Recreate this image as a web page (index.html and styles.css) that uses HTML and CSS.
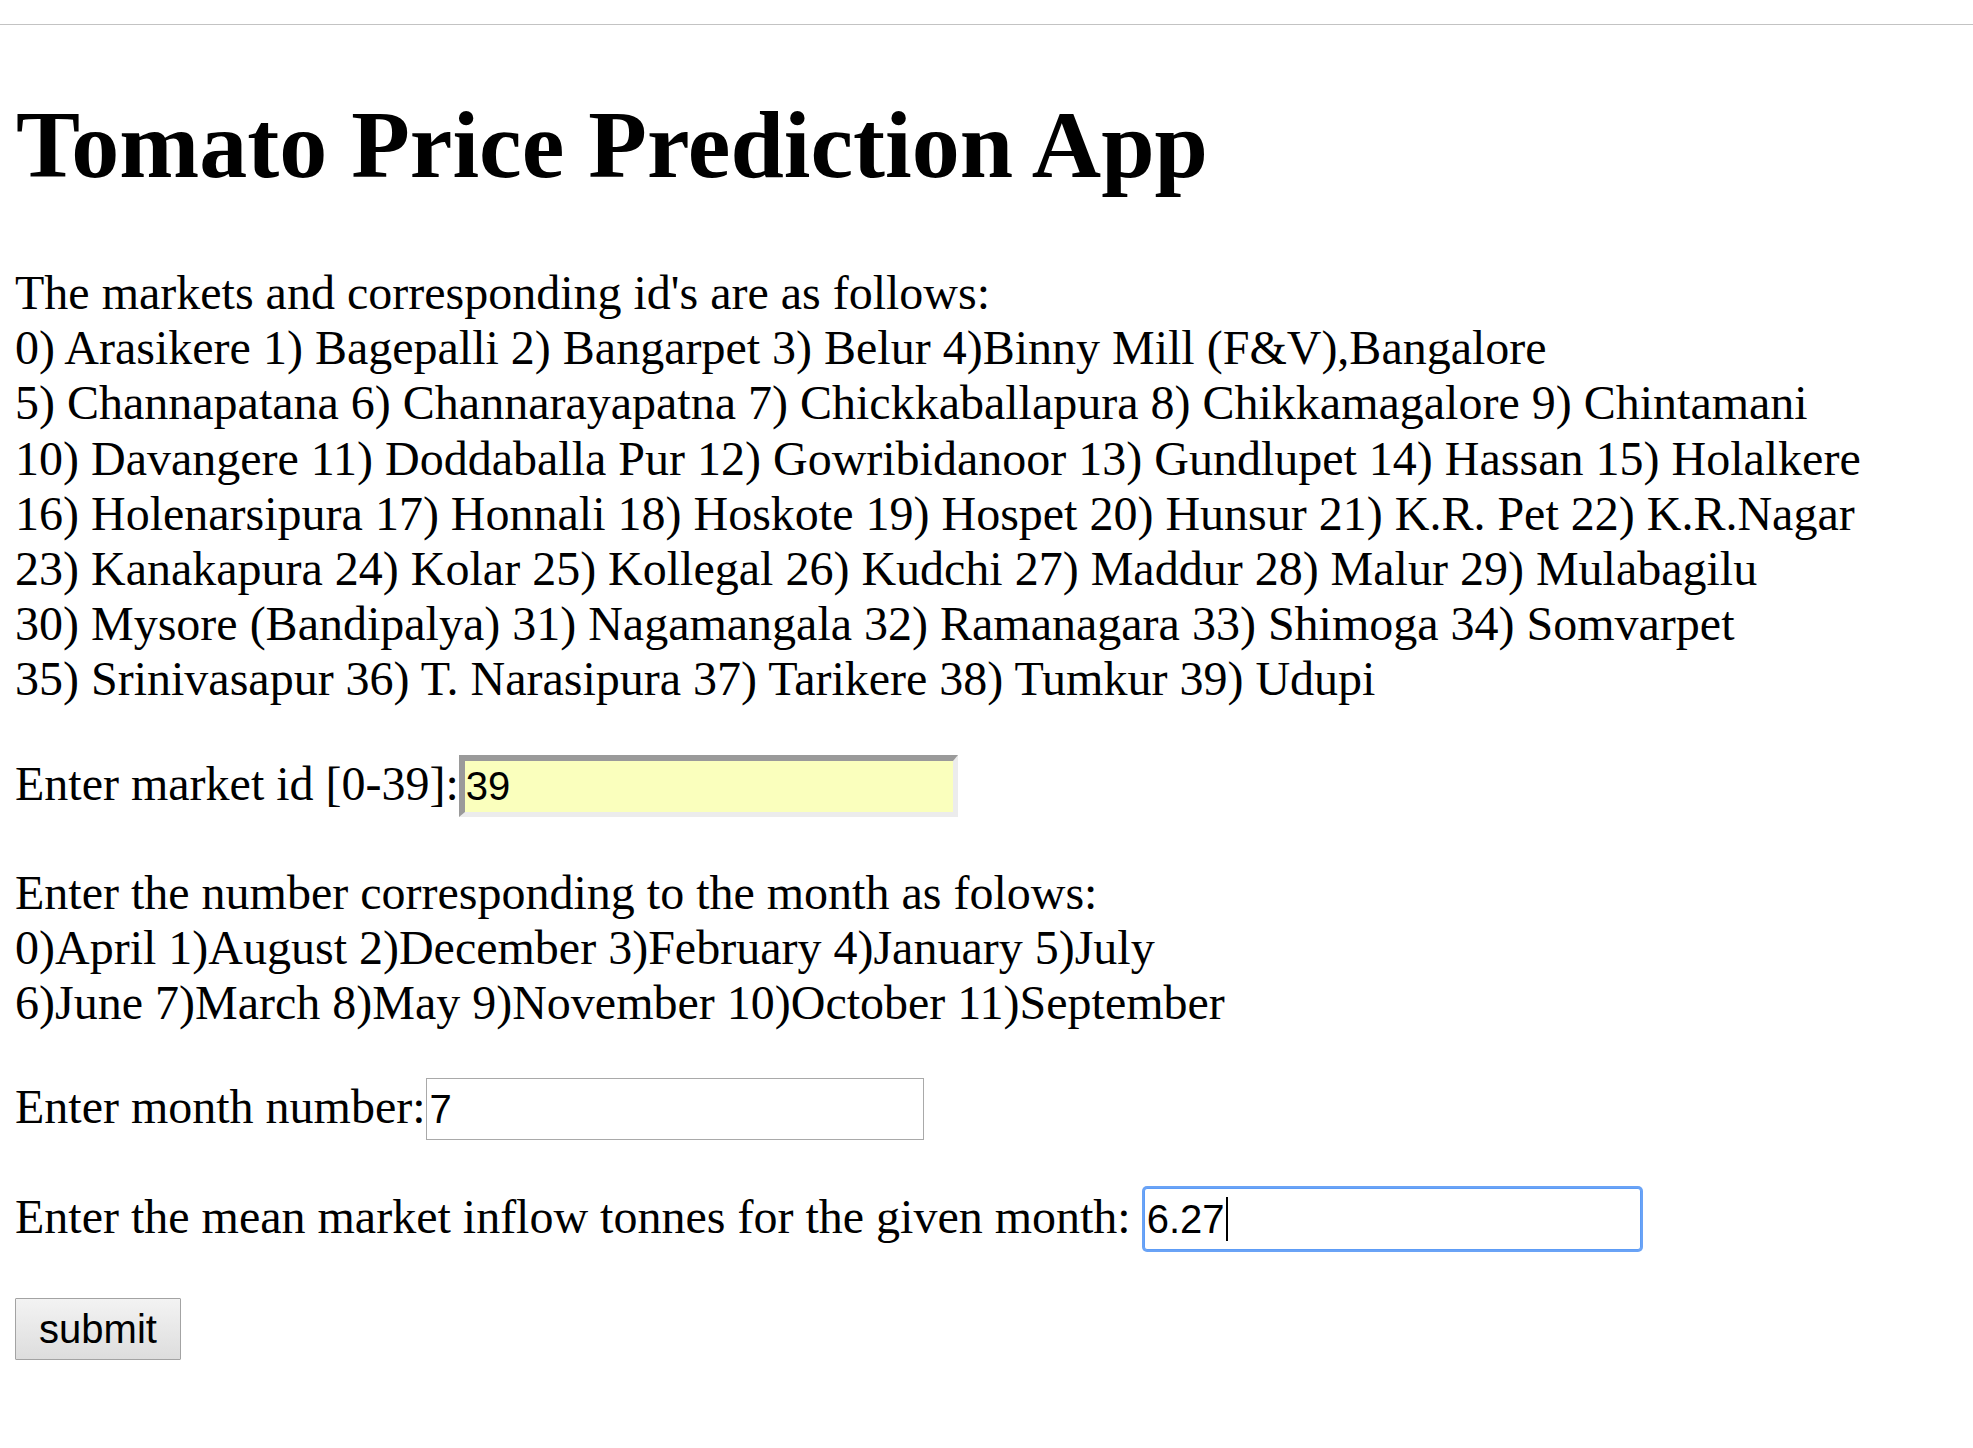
FILE: index.html
```html
<!DOCTYPE html>
<html>
<head>
<meta charset="utf-8">
<title>Tomato Price Prediction App</title>
<link rel="stylesheet" href="styles.css">
</head>
<body>
<div class="topbar"></div>
<main class="page">
  <h1 class="title">Tomato Price Prediction App</h1>
  <form class="form">
    <p class="para">The markets and corresponding id's are as follows:<br>0) Arasikere 1) Bagepalli 2) Bangarpet 3) Belur 4)Binny Mill (F&amp;V),Bangalore<br>5) Channapatana 6) Channarayapatna 7) Chickkaballapura 8) Chikkamagalore 9) Chintamani<br>10) Davangere 11) Doddaballa Pur 12) Gowribidanoor 13) Gundlupet 14) Hassan 15) Holalkere<br>16) Holenarsipura 17) Honnali 18) Hoskote 19) Hospet 20) Hunsur 21) K.R. Pet 22) K.R.Nagar<br>23) Kanakapura 24) Kolar 25) Kollegal 26) Kudchi 27) Maddur 28) Malur 29) Mulabagilu<br>30) Mysore (Bandipalya) 31) Nagamangala 32) Ramanagara 33) Shimoga 34) Somvarpet<br>35) Srinivasapur 36) T. Narasipura 37) Tarikere 38) Tumkur 39) Udupi</p>
    <p class="para">Enter market id [0-39]:<input class="field field-autofill" type="text" value="39"></p>
    <p class="para">Enter the number corresponding to the month as folows:<br>0)April 1)August 2)December 3)February 4)January 5)July<br>6)June 7)March 8)May 9)November 10)October 11)September</p>
    <p class="para">Enter month number:<input class="field field-plain" type="text" value="7"></p>
    <p class="para">Enter the mean market inflow tonnes for the given month: <span class="focus-wrap"><input class="field field-focus" type="text" value="6.27"><span class="caret"></span></span></p>
    <p class="para"><button class="btn" type="button">submit</button></p>
  </form>
</main>
</body>
</html>
```
FILE: styles.css
```css
html, body {
  margin: 0;
  padding: 0;
  background: #ffffff;
}

body {
  font-family: "Liberation Serif", "Times New Roman", serif;
  color: #000000;
}

.topbar {
  height: 24px;
  border-bottom: 1px solid #c3c3c3;
}

.page {
  padding: 0 15px;
}

.title {
  font-family: "Liberation Serif", "Times New Roman", serif;
  font-weight: bold;
  font-size: 96px;
  line-height: normal;
  margin: 64px 0 65px 1px;
}

.form {
  margin: 0;
}

.para {
  font-size: 48px;
  line-height: 55.2px;
  margin: 48px 0;
  white-space: nowrap;
}

.field {
  font-family: "Liberation Sans", Arial, sans-serif;
  font-size: 40px;
  color: #000000;
  box-sizing: border-box;
  height: 62px;
  margin: 0;
  vertical-align: baseline;
  outline: none;
}

.field-autofill {
  width: 499px;
  background: #faffbd;
  border-style: solid;
  border-width: 6px 5px 5px 6px;
  border-color: #9a9a9a #ececec #ececec #9a9a9a;
  padding: 0 1px;
}

.field-plain {
  width: 498px;
  background: #ffffff;
  border: 1px solid #a9a9a9;
  padding: 0 3px;
}

.focus-wrap {
  position: relative;
  display: inline-block;
  margin-left: 1px;
}

.field-focus {
  width: 497px;
  background: #ffffff;
  border: 1px solid #5d9cf6;
  border-radius: 3px;
  box-shadow: 0 0 0 2px #6aa3f6;
  padding: 0 2px;
  caret-color: transparent;
}

.caret {
  position: absolute;
  left: 82px;
  top: 9px;
  width: 2px;
  height: 44px;
  background: #000000;
}

.btn {
  font-family: "Liberation Sans", Arial, sans-serif;
  font-size: 40px;
  color: #000000;
  box-sizing: border-box;
  width: 166px;
  height: 62px;
  padding: 0 20px;
  margin: 0;
  border: 1px solid #a3a3a3;
  border-radius: 1px;
  background: linear-gradient(#f3f3f3, #dddddd);
}
```
